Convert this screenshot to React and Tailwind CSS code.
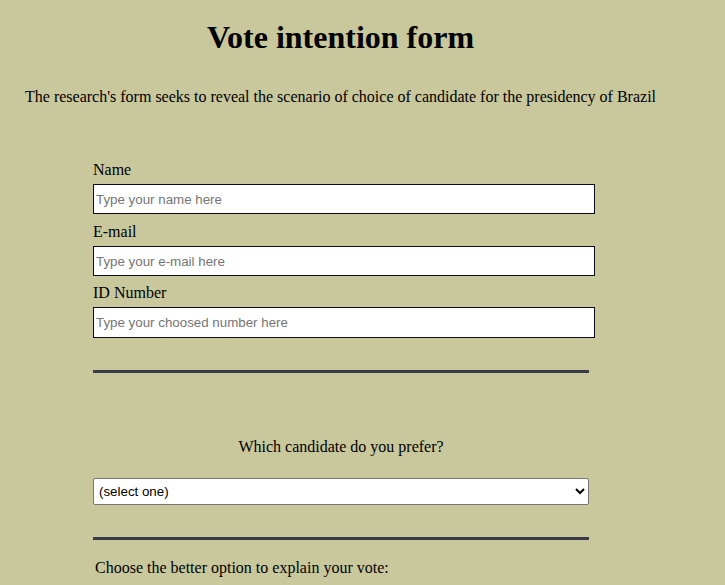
export default function App() {
  const serif = { fontFamily: '"Liberation Serif", "Times New Roman", serif' };
  const sans = { fontFamily: '"Liberation Sans", Arial, sans-serif' };
  return (
    <div className="min-h-[585px] w-full bg-[#c9c79c] text-black" style={serif}>
      <div className="ml-[25px] w-[631px]">
        <h1 className="pt-[19px] text-center text-[32px] font-bold leading-[37px]">Vote intention form</h1>
        <p className="mt-[32px] whitespace-nowrap text-[16px] leading-[18px]">
          The research's form seeks to reveal the scenario of choice of candidate for the presidency of Brazil
        </p>
      </div>
      <div className="ml-[93px] mt-[55px] w-[502px]">
        <label className="block text-[16px] leading-[18px]">Name</label>
        <input
          className="mt-[5px] block h-[30px] w-[502px] border border-[#0a0a1a] bg-white px-[2px] text-[13.33px] placeholder:text-[#757575]"
          style={sans}
          placeholder="Type your name here"
        />
        <label className="mt-[9px] block text-[16px] leading-[18px]">E-mail</label>
        <input
          className="mt-[5px] block h-[30px] w-[502px] border border-[#0a0a1a] bg-white px-[2px] text-[13.33px] placeholder:text-[#757575]"
          style={sans}
          placeholder="Type your e-mail here"
        />
        <label className="mt-[8px] block text-[16px] leading-[18px]">ID Number</label>
        <input
          className="mt-[5px] block h-[31px] w-[502px] border border-[#0a0a1a] bg-white px-[2px] text-[13.33px] placeholder:text-[#757575]"
          style={sans}
          placeholder="Type your choosed number here"
        />
        <div className="mt-[32px] h-[3px] w-[496px] bg-[#3a3a48]" />
        <p className="mt-[65px] w-[496px] text-center text-[16px] leading-[18px]">Which candidate do you prefer?</p>
        <select
          className="mt-[22px] block h-[27px] w-[496px] rounded-[2px] border border-[#767676] bg-white pl-[1px] text-[13.33px] text-black"
          style={sans}
          defaultValue=""
        >
          <option value="">(select one)</option>
          <option value="a">Candidate A</option>
          <option value="b">Candidate B</option>
        </select>
        <div className="mt-[32px] h-[3px] w-[496px] bg-[#3a3a48]" />
        <p className="ml-[2px] mt-[19px] text-[16px] leading-[18px]">Choose the better option to explain your vote:</p>
      </div>
    </div>
  );
}
